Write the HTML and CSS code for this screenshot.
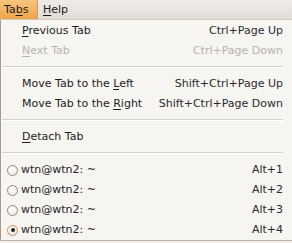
FILE: index.html
```html
<!DOCTYPE html>
<html>
<head>
<meta charset="utf-8">
<link rel="stylesheet" href="styles.css">
</head>
<body>
<div class="menubar">
  <span class="mb-item active">Ta<u>b</u>s</span>
  <span class="mb-item"><u>H</u>elp</span>
</div>
<div class="menu">
  <div class="item"><span class="label"><u>P</u>revious Tab</span><span class="accel">Ctrl+Page Up</span></div>
  <div class="item disabled"><span class="label"><u>N</u>ext Tab</span><span class="accel">Ctrl+Page Down</span></div>
  <div class="sep"></div>
  <div class="item"><span class="label">Move Tab to the <u>L</u>eft</span><span class="accel">Shift+Ctrl+Page Up</span></div>
  <div class="item"><span class="label">Move Tab to the <u>R</u>ight</span><span class="accel">Shift+Ctrl+Page Down</span></div>
  <div class="sep"></div>
  <div class="item"><span class="label"><u>D</u>etach Tab</span></div>
  <div class="sep"></div>
  <div class="item radio"><span class="dot"></span><span class="label">wtn@wtn2: ~</span><span class="accel">Alt+1</span></div>
  <div class="item radio"><span class="dot"></span><span class="label">wtn@wtn2: ~</span><span class="accel">Alt+2</span></div>
  <div class="item radio"><span class="dot"></span><span class="label">wtn@wtn2: ~</span><span class="accel">Alt+3</span></div>
  <div class="item radio"><span class="dot checked"></span><span class="label">wtn@wtn2: ~</span><span class="accel">Alt+4</span></div>
</div>
</body>
</html>
```
FILE: styles.css
```css
html, body {
  margin: 0;
  padding: 0;
}
body {
  width: 292px;
  height: 243px;
  overflow: hidden;
  background: #f4f1ed;
  font-family: "DejaVu Sans", sans-serif;
  font-size: 11px;
  color: #1c1c1c;
}
u {
  text-decoration: underline;
  text-underline-offset: 2px;
}
.menubar {
  height: 19px;
  display: flex;
  align-items: stretch;
  background: linear-gradient(#efece8, #e1dcd6);
  border-bottom: 1px solid #d7c9ba;
}
.mb-item {
  display: flex;
  align-items: center;
  padding: 0 5px 0 4px;
  line-height: 19px;
}
.mb-item.active {
  width: 28px;
  background: linear-gradient(#f6c57f, #eda54c);
  border-right: 1px solid #d99a4c;
}
.mb-item + .mb-item {
  padding-left: 5px;
}
.menu {
  background: #f7f5f2;
  border-left: 1px solid #a99a89;
  border-bottom: 1px solid #bcb2a7;
  padding: 1px 9px 0 0;
  height: 219px;
}
.item {
  display: flex;
  align-items: center;
  height: 20px;
  line-height: 20px;
  padding-left: 21px;
}
.item .label {
  flex: 1;
  white-space: nowrap;
}
.item .accel {
  white-space: nowrap;
  color: #2a2a2a;
}
.item.disabled, .item.disabled .accel {
  color: #b9b3ad;
}
.sep {
  height: 13px;
  box-sizing: border-box;
  padding-top: 5px;
}
.sep::before {
  content: "";
  display: block;
  height: 1px;
  background: #d5cfc8;
  border-bottom: 1px solid #ffffff;
  margin-left: 1px;
}
.item.radio {
  padding-left: 6px;
}
.dot {
  width: 9px;
  height: 9px;
  border: 1px solid #8e8a86;
  border-radius: 50%;
  background: radial-gradient(circle at 40% 35%, #ffffff, #e6e3df);
  margin-right: 3px;
  box-sizing: content-box;
  position: relative;
}
.dot.checked {
  border-color: #c98f4a;
}
.dot.checked::after {
  content: "";
  position: absolute;
  left: 2.5px;
  top: 2.5px;
  width: 4px;
  height: 4px;
  border-radius: 50%;
  background: #1a1a1a;
}
```
